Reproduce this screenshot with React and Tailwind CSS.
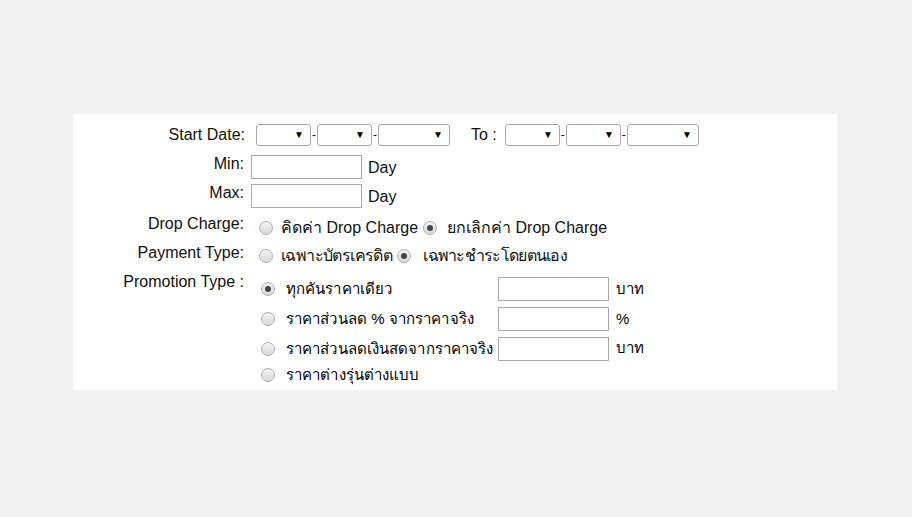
import React from 'react';

function Select({ w }) {
    return (
        <div className={`${w} h-[22px] border border-[#a9a9a9] rounded-[3px] bg-white flex items-center justify-end pr-[6px]`}>
            <span className="text-[10px] leading-none text-black">▼</span>
        </div>
    );
}

function Radio({ checked }) {
    return (
        <span className="w-[14px] h-[14px] rounded-full border border-[#b0b0b0] bg-gradient-to-b from-[#f4f4f4] to-[#dadada] flex items-center justify-center shrink-0">
            {checked && <span className="w-[6px] h-[6px] rounded-full bg-[#444]" />}
        </span>
    );
}

function TextBox() {
    return <div className="w-[111px] h-[24px] border border-[#a9a9a9] bg-white" />;
}

export default function App() {
    const promos = [
        { label: 'ทุกคันราคาเดียว', checked: true, unit: 'บาท', h: 'h-[30px]' },
        { label: 'ราคาส่วนลด % จากราคาจริง', unit: '%', h: 'h-[30px]' },
        { label: 'ราคาส่วนลดเงินสดจากราคาจริง', unit: 'บาท', h: 'h-[29px]' },
        { label: 'ราคาต่างรุ่นต่างแบบ', h: 'h-[24px]' },
    ];

    return (
        <div className="w-[912px] h-[517px] bg-[#f1f1f1] pt-[114px] pl-[73px] text-[16px] text-[#111]" style={{ fontFamily: '"Liberation Sans", Arial, sans-serif' }}>
            <div className="w-[764px] h-[276px] bg-white pt-[10px] overflow-hidden">
                {/* start / to date */}
                <div className="flex items-center h-[22px]">
                    <div className="w-[172px] text-right">Start Date:</div>
                    <div className="flex items-center ml-[11px]">
                        <Select w="w-[55px]" />
                        <span className="w-[6px] text-center text-[12px]">-</span>
                        <Select w="w-[55px]" />
                        <span className="w-[6px] text-center text-[12px]">-</span>
                        <Select w="w-[72px]" />
                    </div>
                    <div className="ml-[21px] mr-[8px]">To :</div>
                    <div className="flex items-center">
                        <Select w="w-[55px]" />
                        <span className="w-[6px] text-center text-[12px]">-</span>
                        <Select w="w-[55px]" />
                        <span className="w-[6px] text-center text-[12px]">-</span>
                        <Select w="w-[72px]" />
                    </div>
                </div>

                <div className="flex items-start mt-[9px] h-[24px]">
                    <div className="w-[172px] text-right pr-[1px] leading-[18px]">Min:</div>
                    <div className="ml-[6px]"><TextBox /></div>
                    <div className="ml-[6px] leading-[24px] pt-[1px]">Day</div>
                </div>
                <div className="flex items-start mt-[5px] h-[24px]">
                    <div className="w-[172px] text-right pr-[1px] leading-[18px]">Max:</div>
                    <div className="ml-[6px]"><TextBox /></div>
                    <div className="ml-[6px] leading-[24px] pt-[1px]">Day</div>
                </div>

                <div className="flex items-start mt-[4px] h-[28px]">
                    <div className="w-[172px] text-right pr-[1px] leading-[18px] pt-[3px]">Drop Charge:</div>
                    <div className="flex items-center ml-[14px] pt-[7px] leading-[18px] whitespace-nowrap">
                        <Radio />
                        <span className="ml-[8px]">คิดค่า Drop Charge</span>
                        <span className="ml-[5px]"><Radio checked /></span>
                        <span className="ml-[10px]">ยกเลิกค่า Drop Charge</span>
                    </div>
                </div>

                <div className="flex items-start h-[29px]">
                    <div className="w-[172px] text-right pr-[1px] leading-[18px] pt-[4px]">Payment Type:</div>
                    <div className="flex items-center ml-[14px] pt-[7px] leading-[18px] whitespace-nowrap">
                        <Radio />
                        <span className="ml-[8px] tracking-[-0.6px]">เฉพาะบัตรเครดิต</span>
                        <span className="ml-[5px]"><Radio checked /></span>
                        <span className="ml-[12px] tracking-[-0.7px]">เฉพาะชำระโดยตนเอง</span>
                    </div>
                </div>

                <div className="flex items-start">
                    <div className="w-[172px] text-right pr-[1px] leading-[18px] pt-[4px]">Promotion Type :</div>
                    <div className="ml-[10px] pt-[5px] flex flex-col">
                        {promos.map((p, i) => (
                            <div key={i} className={`flex items-center ${p.h}`}>
                                <span className="ml-[6px]"><Radio checked={p.checked} /></span>
                                <span className="ml-[11px] w-[212px] whitespace-nowrap text-[15px] tracking-[0.1px] text-[#000] leading-[18px]">{p.label}</span>
                                {p.unit && (
                                    <>
                                        <TextBox />
                                        <span className="ml-[7px] text-[15px] text-[#000]">{p.unit}</span>
                                    </>
                                )}
                            </div>
                        ))}
                    </div>
                </div>
            </div>
        </div>
    );
}
